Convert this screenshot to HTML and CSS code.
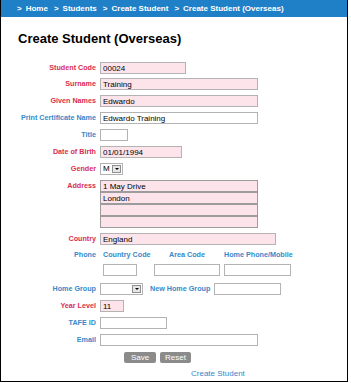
FILE: index.html
```html
<!DOCTYPE html>
<html lang="en">
<head>
    <meta charset="UTF-8">
    <meta name="viewport" content="width=device-width, initial-scale=1.0">
    <title>Create Student (Overseas)</title>
    <link rel="stylesheet" href="styles.css">
</head>

<body>
    <div class="frame">
        <div class="crumbs">
            <span class="sep first">&gt;</span>Home<span class="sep">&gt;</span>Students<span class="sep">&gt;</span>Create Student<span class="sep">&gt;</span>Create Student (Overseas)
        </div>

        <h1>Create Student (Overseas)</h1>

        <form class="form">
            <div class="row row-first">
                <label class="req">Student Code</label>
                <input class="field pink w-code" type="text" value="00024">
            </div>
            <div class="row">
                <label class="req">Surname</label>
                <input class="field pink w-long" type="text" value="Training">
            </div>
            <div class="row">
                <label class="req">Given Names</label>
                <input class="field pink w-long" type="text" value="Edwardo">
            </div>
            <div class="row">
                <label class="opt">Print Certificate Name</label>
                <input class="field w-long" type="text" value="Edwardo Training">
            </div>
            <div class="row">
                <label class="opt">Title</label>
                <input class="field w-title" type="text" value="">
            </div>
            <div class="row">
                <label class="req">Date of Birth</label>
                <input class="field pink w-dob" type="text" value="01/01/1994">
            </div>
            <div class="row">
                <label class="req">Gender</label>
                <div class="select w-gender">
                    <span class="select-value">M</span>
                    <span class="select-arrow"></span>
                </div>
            </div>
            <div class="row row-tall">
                <label class="req">Address</label>
                <div class="address">
                    <input class="field pink w-long" type="text" value="1 May Drive">
                    <input class="field pink w-long" type="text" value="London">
                    <input class="field pink w-long" type="text" value="">
                    <input class="field pink w-long" type="text" value="">
                </div>
            </div>
            <div class="row">
                <label class="req">Country</label>
                <input class="field pink w-country" type="text" value="England">
            </div>

            <div class="row row-phone-labels">
                <label class="opt">Phone</label>
                <div class="phone-grid">
                    <span class="sub-label">Country Code</span>
                    <span class="sub-label area">Area Code</span>
                    <span class="sub-label">Home Phone/Mobile</span>
                </div>
            </div>
            <div class="row row-phone">
                <span class="spacer"></span>
                <div class="phone-grid">
                    <input class="field w-cc" type="text" value="">
                    <input class="field w-area" type="text" value="">
                    <input class="field w-home" type="text" value="">
                </div>
            </div>

            <div class="row">
                <label class="opt">Home Group</label>
                <div class="select w-group">
                    <span class="select-value"></span>
                    <span class="select-arrow"></span>
                </div>
                <span class="inline-label opt">New Home Group</span>
                <input class="field w-newgroup" type="text" value="">
            </div>
            <div class="row">
                <label class="req">Year Level</label>
                <input class="field pink w-year" type="text" value="11">
            </div>
            <div class="row">
                <label class="opt">TAFE ID</label>
                <input class="field w-tafe" type="text" value="">
            </div>
            <div class="row row-last">
                <label class="opt">Email</label>
                <input class="field w-long" type="text" value="">
            </div>

            <div class="actions">
                <button type="button" class="btn btn-save">Save</button>
                <button type="button" class="btn btn-reset">Reset</button>
            </div>

            <a class="footer-link" href="#">Create Student</a>
        </form>
    </div>
</body>
</html>
```

FILE: styles.css
```css
:root {
    --bar-color: #1f80c8;
    --req-color: #d92d52;
    --opt-color: #3689c9;
    --pink: #fde4ea;
    --field-border: #b3b3b3;
}

* {
    box-sizing: border-box;
    margin: 0;
    padding: 0;
}

body {
    font-family: "Liberation Sans", Arial, sans-serif;
    background-color: #ffffff;
    color: #000;
}

.frame {
    width: 348px;
    height: 382px;
    border-left: 1px solid #000;
    border-right: 1px solid #000;
    border-bottom: 1px solid #000;
}

/* breadcrumb bar */
.crumbs {
    height: 17px;
    line-height: 17px;
    background-color: var(--bar-color);
    color: #fff;
    font-size: 8px;
    font-weight: bold;
    padding-left: 16px;
    white-space: nowrap;
}

.crumbs .sep {
    margin: 0 4px 0 6px;
}

.crumbs .sep.first {
    margin-left: 0;
}

h1 {
    font-size: 13px;
    line-height: 15px;
    font-weight: bold;
    margin: 14px 0 16px 17px;
}

/* form rows */
.form {
    display: flex;
    flex-direction: column;
}

.row {
    display: flex;
    align-items: flex-start;
    height: 12px;
    margin-bottom: 5px;
}

.row-first {
    margin-bottom: 4px;
}

.row-tall {
    height: 48px;
}

.row-phone-labels {
    height: 9px;
    margin-bottom: 5px;
}

.row-phone {
    margin-bottom: 7px;
}

.row-last {
    margin-bottom: 6px;
}

.row label,
.spacer {
    width: 95px;
    flex-shrink: 0;
    margin-right: 4px;
    text-align: right;
    font-size: 7.2px;
    font-weight: bold;
    line-height: 12px;
    white-space: nowrap;
}

.row-phone-labels label {
    line-height: 9px;
}

.req {
    color: var(--req-color);
}

.opt {
    color: var(--opt-color);
}

.field {
    display: block;
    height: 12px;
    border: 1px solid var(--field-border);
    background-color: #fff;
    padding: 0 2px;
    font-family: "Liberation Sans", Arial, sans-serif;
    font-size: 8px;
    line-height: 10px;
    color: #000;
    outline: none;
}

.field.pink {
    background-color: var(--pink);
}

.w-code { width: 86px; }
.w-long { width: 158px; }
.w-title { width: 28px; }
.w-dob { width: 82px; }
.w-country { width: 176px; }
.w-cc { width: 34px; }
.w-area { width: 66px; }
.w-home { width: 67px; }
.w-newgroup { width: 67px; }
.w-year { width: 24px; }
.w-tafe { width: 67px; }

.address {
    display: flex;
    flex-direction: column;
}

.address .field {
    border-color: #9c9c9c;
}

/* fake dropdowns */
.select {
    display: flex;
    height: 12px;
    border: 1px solid var(--field-border);
    background-color: #fff;
    padding: 1px;
}

.w-gender { width: 23px; }
.w-group { width: 43px; }

.select-value {
    flex: 1;
    font-size: 8px;
    line-height: 8px;
    padding-left: 1px;
}

.select-arrow {
    position: relative;
    width: 9px;
    height: 8px;
    border: 1px solid #8f8f8f;
    background-color: #e6e6e6;
}

.select-arrow::after {
    content: "";
    position: absolute;
    left: 2px;
    top: 2px;
    border-left: 2px solid transparent;
    border-right: 2px solid transparent;
    border-top: 2px solid #000;
}

.inline-label {
    font-size: 7.2px;
    font-weight: bold;
    line-height: 12px;
    margin: 0 4px 0 7px;
    white-space: nowrap;
}

/* phone block */
.phone-grid {
    display: grid;
    grid-template-columns: 51px 70px 70px;
    margin-left: 3px;
}

.sub-label {
    font-size: 7.2px;
    font-weight: bold;
    line-height: 9px;
    color: var(--opt-color);
    white-space: nowrap;
}

.sub-label.area {
    padding-left: 15px;
}

/* buttons */
.actions {
    display: flex;
    gap: 4px;
    margin-left: 123px;
    height: 11px;
}

.btn {
    height: 11px;
    border: none;
    border-radius: 2px;
    background-color: #8b8b8b;
    color: #fff;
    font-family: "Liberation Sans", Arial, sans-serif;
    font-size: 8px;
    line-height: 11px;
}

.btn-save { width: 32px; }
.btn-reset { width: 31px; }

.footer-link {
    margin: 7px 0 0 190px;
    font-size: 8px;
    line-height: 8px;
    color: #3a86c6;
    text-decoration: none;
}
```
